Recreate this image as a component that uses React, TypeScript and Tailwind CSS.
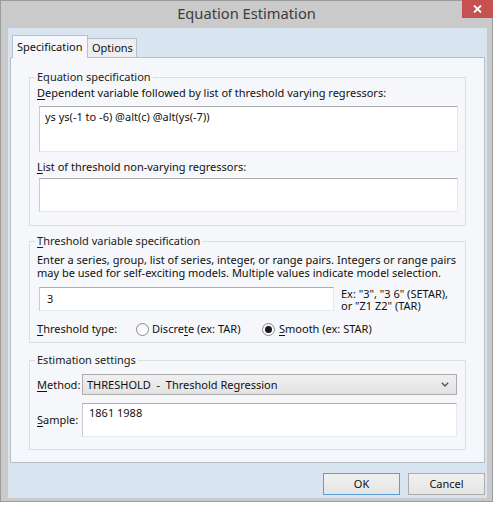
import React from 'react';

function U({ children }: { children: React.ReactNode }) {
  return <span className="underline underline-offset-[2px]">{children}</span>;
}

function Radio({ checked }: { checked?: boolean }) {
  return (
    <span className="flex h-[13px] w-[13px] shrink-0 items-center justify-center rounded-full border border-[#8a8a8a] bg-gradient-to-b from-[#f4f4f4] to-[#ffffff]">
      {checked && <span className="h-[7px] w-[7px] rounded-full bg-[#1b1b1b]" />}
    </span>
  );
}

const box = 'border border-t-[#abadb3] border-l-[#c9ccd2] border-r-[#e3e9ef] border-b-[#e3e9ef] bg-white';

export default function App() {
  return (
    <div className="h-[505px] w-[497px] bg-white font-['Noto_Sans',sans-serif] text-[11px] leading-[16px] text-[#111]">
      <div className="flex h-[502px] w-[493px] flex-col border border-[#9b9b9b] bg-[#cacaca]">
        {/* Title bar */}
        <div className="relative flex h-[27px] shrink-0 items-center justify-center pb-[3px] text-[14.7px] text-[#3c3c3c]">
          Equation Estimation
          <div className="absolute right-[-1px] top-[-1px] flex h-[18px] w-[31px] items-center justify-center bg-[#c75050]">
            <svg width="9" height="8" viewBox="0 0 9 8">
              <path d="M1 0.5 L8 7.5 M8 0.5 L1 7.5" stroke="white" strokeWidth="1.8" />
            </svg>
          </div>
        </div>

        {/* Client area */}
        <div className="mb-[4px] ml-[7px] mr-[5px] flex flex-1 flex-col bg-[#d9e4f1] px-[2px] pb-[3px] pt-[7px]">
          {/* Tabs */}
          <div className="flex h-[22px] items-end pl-[2px]">
            <div className="relative z-10 mb-[-1px] flex h-[23px] w-[76px] items-center border border-b-0 border-[#b7c0ca] bg-[#f5f7fa] pl-[4px]">
              Specification
            </div>
            <div className="flex h-[19px] w-[49px] items-center border border-l-0 border-b-0 border-[#b7c0ca] bg-[#eceef1] pl-[4px]">
              Options
            </div>
          </div>

          {/* Tab page */}
          <div className="border border-[#b7c0ca] bg-[#f5f7fa] px-[18px] pb-[12px] pt-[11px]">
            {/* Equation specification */}
            <fieldset className="border border-[#d9dfe6] px-[7px] pb-[13px]">
              <legend className="-ml-[2px] px-[2px] text-[#222]">Equation specification</legend>
              <div className="whitespace-nowrap">
                <U>D</U>ependent variable followed by list of threshold varying regressors:
              </div>
              <div className={`ml-[2px] mt-[5px] h-[46px] pl-[5px] pt-[2px] ${box}`}>
                ys ys(-1 to -6) @alt(c) @alt(ys(-7))
              </div>
              <div className="mt-[7px] whitespace-nowrap">
                <U>L</U>ist of threshold non-varying regressors:
              </div>
              <div className={`ml-[2px] mt-[3px] h-[34px] ${box}`} />
            </fieldset>

            {/* Threshold variable specification */}
            <fieldset className="mt-[7px] border border-[#d9dfe6] px-[7px] pb-[5px]">
              <legend className="-ml-[2px] px-[2px] text-[#222]">
                <U>T</U>hreshold variable specification
              </legend>
              <div className="mt-[4px] whitespace-nowrap leading-[13px]">
                Enter a series, group, list of series, integer, or range pairs. Integers or range pairs
                <br />
                may be used for self-exciting models. Multiple values indicate model selection.
              </div>
              <div className="mt-[8px] flex">
                <div className={`ml-[2px] h-[24px] w-[295px] pl-[7px] pt-[3px] ${box}`}>3</div>
                <div className="ml-[7px] mt-[1px] whitespace-nowrap leading-[12px]">
                  Ex: "3", "3 6" (SETAR),
                  <br />
                  or "Z1 Z2" (TAR)
                </div>
              </div>
              <div className="mt-[9px] flex h-[16px] items-center whitespace-nowrap">
                <div className="w-[99px]">
                  <U>T</U>hreshold type:
                </div>
                <div className="flex w-[126px] items-center gap-[3px]">
                  <Radio />
                  <span>
                    Discre<U>t</U>e (ex: TAR)
                  </span>
                </div>
                <div className="flex items-center gap-[4px]">
                  <Radio checked />
                  <span>
                    <U>S</U>mooth (ex: STAR)
                  </span>
                </div>
              </div>
            </fieldset>

            {/* Estimation settings */}
            <fieldset className="mt-[9px] border border-[#d9dfe6] px-[7px] pb-[12px]">
              <legend className="-ml-[2px] px-[2px] text-[#222]">Estimation settings</legend>
              <div className="mt-[6px] flex items-center">
                <div className="w-[45px] shrink-0">
                  <U>M</U>ethod:
                </div>
                <div className="mr-[1px] flex h-[21px] flex-1 items-center justify-between border border-[#acacac] bg-gradient-to-b from-[#f0f0f0] to-[#e3e3e3] pl-[4px] pr-[7px]">
                  <span className="whitespace-pre">THRESHOLD  -  Threshold Regression</span>
                  <svg width="8" height="5" viewBox="0 0 8 5">
                    <path d="M0.8 0.8 L4 4 L7.2 0.8" fill="none" stroke="#555" strokeWidth="1.4" />
                  </svg>
                </div>
              </div>
              <div className="mt-[8px] flex items-center">
                <div className="w-[45px] shrink-0">
                  <U>S</U>ample:
                </div>
                <div className={`mr-[1px] h-[34px] flex-1 pl-[6px] pt-[1px] ${box}`}>1861 1988</div>
              </div>
            </fieldset>
          </div>

          {/* Buttons */}
          <div className="mt-[10px] flex justify-end gap-[8px]">
            <button className="h-[22px] w-[77px] border border-[#5e9ed6] bg-gradient-to-b from-[#f0f0f0] to-[#e5e5e5] text-[#111]">
              OK
            </button>
            <button className="h-[22px] w-[77px] border border-[#acacac] bg-gradient-to-b from-[#f0f0f0] to-[#e5e5e5] text-[#111]">
              Cancel
            </button>
          </div>
        </div>
      </div>
    </div>
  );
}
